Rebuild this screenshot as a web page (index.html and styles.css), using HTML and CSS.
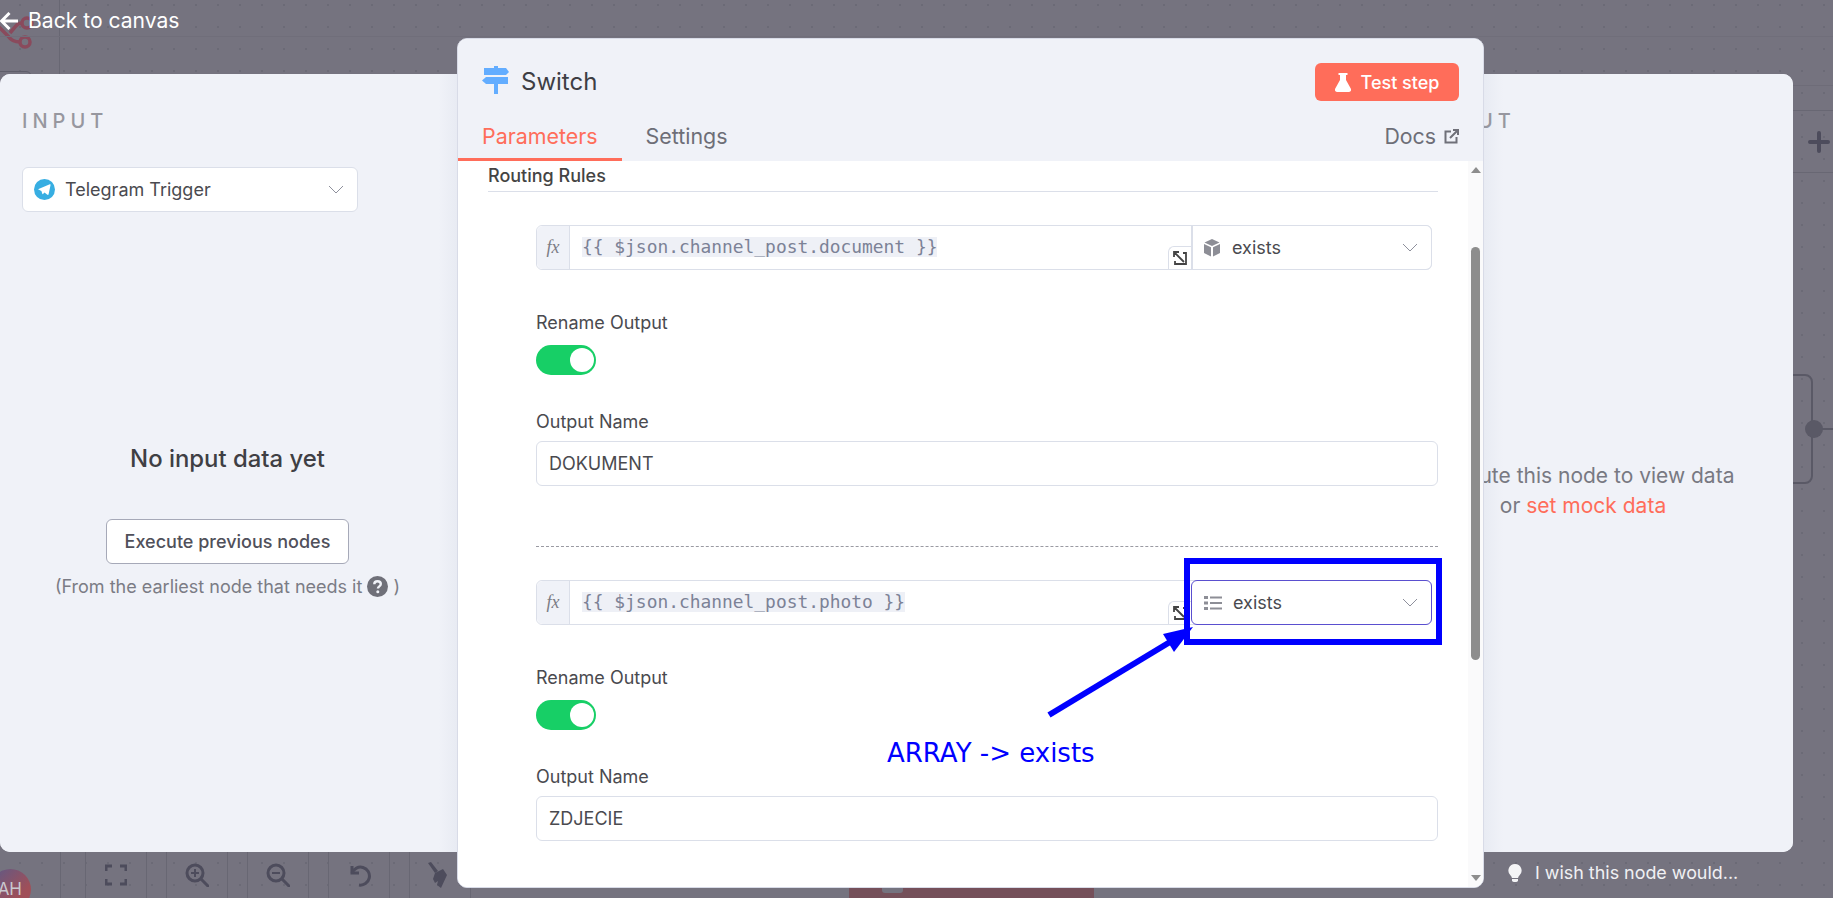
FILE: index.html
```html
<!DOCTYPE html>
<html lang="en">
<head>
<meta charset="utf-8">
<title>Switch</title>
<link rel="stylesheet" href="styles.css">
</head>
<body>
<div class="stage">
  <div class="canvas">
    <svg class="cv-logo" width="34" height="50" viewBox="0 0 34 50" fill="none" stroke="#8a4a5c" stroke-width="3.500"><circle cx="27" cy="23" r="5"/><circle cx="25" cy="42" r="5"/><path d="M-2 26L8 36Q12 42 20 42M10 33L16 26Q18 23 22 23"/></svg>
    <div class="cv-line cv-v1"></div>
    <div class="cv-line cv-h1"></div>
    <div class="cv-line cv-h2"></div>
    <div class="cv-line cv-h3"></div>
    <div class="cv-line cv-h4"></div>
    <div class="cv-box"></div>
    <svg class="cv-plus" width="22" height="22" viewBox="0 0 22 22"><path d="M11 2V20M2 11H20" stroke="#4d4c5c" stroke-width="4" stroke-linecap="round"/></svg>
    <div class="cv-bracket"></div>
    <div class="cv-bracket-wire"></div>
    <div class="cv-dot"></div>
    <div class="cv-avatar">AH</div>
    <div class="cv-toolbar">
      <div class="cv-tool"><svg width="22" height="22" viewBox="0 0 22 22" fill="none" stroke="#4d4c5c" stroke-width="3"><path d="M1 7V2H7M15 2H21V7M21 15V20H15M7 20H1V15"/></svg></div>
      <div class="cv-tool"><svg width="24" height="24" viewBox="0 0 24 24" fill="none" stroke="#4d4c5c" stroke-width="3"><circle cx="10" cy="10" r="8"/><path d="M16 16L23 23" stroke-linecap="round"/><path d="M10 6V14M6 10H14" stroke-width="2"/></svg></div>
      <div class="cv-tool"><svg width="24" height="24" viewBox="0 0 24 24" fill="none" stroke="#4d4c5c" stroke-width="3"><circle cx="10" cy="10" r="8"/><path d="M16 16L23 23" stroke-linecap="round"/><path d="M6 10H14" stroke-width="2"/></svg></div>
      <div class="cv-tool"><svg width="24" height="24" viewBox="0 0 24 24" fill="none" stroke="#4d4c5c" stroke-width="3"><path d="M5 3V10H12"/><path d="M5 10A9 9 0 1 1 12 22"/></svg></div>
      <div class="cv-tool"><svg width="26" height="26" viewBox="0 0 26 26" fill="#4d4c5c"><path d="M1 1L4 0L11 9L8 11Z"/><path d="M8 11L16 7L20 13L14 26L10 23L11 19L8 21L6 17Z"/></svg></div>
    </div>
    <div class="cv-exec"><span class="cv-exec-notch"></span></div>
  </div>

  <a class="back"><svg width="18" height="18" viewBox="0 0 18 18" fill="none" stroke="#fff" stroke-width="3"><path d="M18 9H1.500M9.500 1L1.500 9L9.500 17"/></svg><span>Back to canvas</span></a>

  <div class="wish"><svg width="14" height="18" viewBox="0 0 14 18" fill="#f4f4f6"><path d="M7 0a6.600 6.600 0 0 1 4.600 11.300c-.9.9-1.300 1.500-1.500 2.700H3.900c-.2-1.200-.6-1.800-1.500-2.700A6.600 6.600 0 0 1 7 0Z"/><path d="M4 15h6v1.200a1.800 1.800 0 0 1-1.800 1.800H5.800A1.800 1.800 0 0 1 4 16.200Z"/></svg><span>I wish this node would...</span></div>

  <div class="ndv">
    <section class="side side-input">
      <div class="side-label">INPUT</div>
      <div class="node-select">
        <svg width="21" height="21" viewBox="0 0 21 21"><circle cx="10.500" cy="10.500" r="10.500" fill="#37aee2"/><path d="M4 10.300L15.800 5.300C16.300 5.100 16.700 5.500 16.500 6.200L14.600 15.300C14.400 16 14 16.100 13.400 15.800L10.500 13.600L9 15C8.700 15.300 8.400 15.300 8.300 14.800L7.400 12Z" fill="#fff"/></svg>
        <span class="node-select-text">Telegram Trigger</span>
        <svg class="chev" width="16" height="9" viewBox="0 0 16 9" fill="none" stroke="#8e909c" stroke-width="1"><path d="M1 1L8 8L15 1"/></svg>
      </div>
      <div class="side-empty">
        <h2 class="empty-title">No input data yet</h2>
        <button class="exec-btn">Execute previous nodes</button>
        <p class="empty-hint">(From the earliest node that needs it <svg class="help" width="21" height="21" viewBox="0 0 21 21"><circle cx="10.500" cy="10.500" r="10.500" fill="#6f7079"/><path d="M7.300 8.200C7.300 6.300 8.700 5.200 10.500 5.200C12.400 5.200 13.800 6.300 13.800 8C13.800 10.400 10.900 10.300 10.900 12.500" fill="none" stroke="#f0f2f8" stroke-width="2.400"/><circle cx="10.800" cy="15.700" r="1.500" fill="#f0f2f8"/></svg> )</p>
      </div>
    </section>
    <section class="side side-output">
      <div class="side-label">OUTPUT</div>
      <div class="output-empty">
        <p>Execute this node to view data</p>
        <p>or <span class="link">set mock data</span></p>
      </div>
    </section>
  </div>

  <main class="panel">
    <header class="panel-head">
      <div class="title-row">
        <svg class="title-icon" width="28" height="28" viewBox="0 0 28 28" fill="#63adff"><path d="M12 0H16V3H12Z"/><path d="M2 2H24L27 6L24 9H2Z"/><path d="M4 11H26V18H4L0 14.500Z"/><path d="M12 18H16V28H12Z"/></svg>
        <h1 class="title">Switch</h1>
        <button class="test-btn"><svg width="16" height="19" viewBox="0 0 16 19" fill="#fff"><path d="M3.500 0H12.500V2H11V7L16 16C16.500 17.500 15.500 19 14 19H2C.5 19 -.5 17.500 0 16L5 7V2H3.500Z"/></svg>Test step</button>
      </div>
      <nav class="tabs">
        <a class="tab tab-active">Parameters</a>
        <a class="tab">Settings</a>
        <a class="docs">Docs <svg width="15" height="15" viewBox="0 0 15 15" fill="none" stroke="#6f7079" stroke-width="2"><path d="M7 2.500H1.500V13.500H12.500V8"/><path d="M6 9L13.500 1.500M9 1H14V6"/></svg></a>
      </nav>
    </header>
    <div class="panel-body">
      <div class="rules-head">Routing Rules</div>
      <div class="rule">
        <div class="expr-row">
          <div class="fx">fx</div>
          <div class="expr"><span class="expr-code">{{ $json.channel_post.document }}</span>
            <span class="expand"><svg width="16" height="16" viewBox="0 0 16 16" fill="none" stroke="#444" stroke-width="1.800"><path d="M2 2L12 12M2 7V2H7M11 3H14V14H3V11"/></svg></span>
          </div>
          <div class="op">
            <svg width="18" height="18" viewBox="0 0 18 18" fill="#8d8e96"><path d="M9 0L16.500 3.500L9 7L1.500 3.500Z"/><path d="M1 5L8 8.300V17.500L1 14Z"/><path d="M17 5L10 8.300V17.500L17 14Z"/></svg>
            <span class="op-text">exists</span>
            <svg class="chev" width="16" height="9" viewBox="0 0 16 9" fill="none" stroke="#8e909c" stroke-width="1"><path d="M1 1L8 8L15 1"/></svg>
          </div>
        </div>
        <div class="field-label label-rename">Rename Output</div>
        <div class="toggle"><span class="toggle-knob"></span></div>
        <div class="field-label label-name">Output Name</div>
        <div class="text-input">DOKUMENT</div>
      </div>
      <div class="rule-sep"></div>
      <div class="rule">
        <div class="expr-row">
          <div class="fx">fx</div>
          <div class="expr"><span class="expr-code">{{ $json.channel_post.photo }}</span>
            <span class="expand"><svg width="16" height="16" viewBox="0 0 16 16" fill="none" stroke="#444" stroke-width="1.800"><path d="M2 2L12 12M2 7V2H7M11 3H14V14H3V11"/></svg></span>
          </div>
          <div class="op op-focus">
            <svg width="18" height="14" viewBox="0 0 18 14" fill="#8d8e96"><rect x="0" y="0" width="4" height="3"/><rect x="0" y="5.500" width="4" height="3"/><rect x="0" y="11" width="4" height="3"/><rect x="6" y=".5" width="12" height="2"/><rect x="6" y="6" width="12" height="2"/><rect x="6" y="11.500" width="12" height="2"/></svg>
            <span class="op-text">exists</span>
            <svg class="chev" width="16" height="9" viewBox="0 0 16 9" fill="none" stroke="#8e909c" stroke-width="1"><path d="M1 1L8 8L15 1"/></svg>
          </div>
        </div>
        <div class="field-label label-rename">Rename Output</div>
        <div class="toggle"><span class="toggle-knob"></span></div>
        <div class="field-label label-name">Output Name</div>
        <div class="text-input">ZDJECIE</div>
      </div>
      <div class="scrollbar">
        <span class="sb-up"></span>
        <span class="sb-thumb"></span>
        <span class="sb-down"></span>
      </div>
    </div>
  </main>

  <div class="note-box"></div>
  <svg class="note-arrow" width="150" height="100" viewBox="0 0 150 100"><path d="M3 93L124 20" stroke="#0000ff" stroke-width="6"/><path d="M147 5L117 12L128 30Z" fill="#0000ff"/></svg>
  <div class="note-text">ARRAY -&gt; exists</div>
</div>
</body>
</html>
```

FILE: styles.css
```css
* { box-sizing: border-box; }
html, body { margin: 0; padding: 0; height: 100%; overflow: hidden; }
body { font-family: Inter, "Liberation Sans", sans-serif; color: #444; }
p, h1, h2 { margin: 0; font-weight: 400; }

.stage { position: relative; width: 1833px; height: 898px; overflow: hidden; }

/* dimmed workflow canvas behind the dialog */
.canvas {
  position: absolute; inset: 0;
  background-color: #75737f;
  background-image: radial-gradient(circle at 1px 1px, #6b6a76 1px, transparent 1.2px);
  background-size: 22px 22px;
  background-position: 19px 4px;
}
.cv-logo { position: absolute; left: 0; top: 0; }
.cv-line { position: absolute; background: #686773; }
.cv-v1 { left: 59px; top: 0; width: 1px; height: 74px; }
.cv-h1 { left: 0; right: 0; top: 36px; height: 1px; background: #706e7a; }
.cv-h2 { left: 1793px; right: 0; top: 85px; height: 1px; background: #6e6c78; }
.cv-h3 { left: 1793px; right: 0; top: 110px; height: 1px; }
.cv-h4 { left: 1793px; right: 0; top: 172px; height: 1px; }
.cv-box { position: absolute; left: -10px; top: 71px; width: 42px; height: 20px; border: 1px solid #5f5e6a; border-radius: 6px; }
.cv-plus { position: absolute; left: 1808px; top: 131px; }
.cv-bracket { position: absolute; left: 1780px; top: 374px; width: 33px; height: 110px; border: 2px solid #5a5966; border-radius: 8px; }
.cv-bracket-wire { position: absolute; left: 1814px; top: 428px; width: 19px; height: 2px; background: #5a5966; }
.cv-dot { position: absolute; left: 1805px; top: 420px; width: 18px; height: 18px; border-radius: 50%; background: #5a5966; }
.cv-avatar {
  position: absolute; left: -10px; top: 869px; width: 41px; height: 41px; border-radius: 50%; padding-right: 9px;
  background: linear-gradient(135deg, #5c5a88, #a04f58 70%);
  color: #c9c8cf; font-size: 17px; line-height: 41px; text-align: right;
}
.cv-toolbar { position: absolute; left: 60px; top: 852px; height: 46px; display: flex; gap: 19px; padding-left: 24px; border-left: 1px solid #686773; }
.cv-tool {
  width: 62px; height: 46px; display: flex; align-items: center; justify-content: center;
  border: 1px solid #686773; border-width: 0 1px;
}
.cv-exec { position: absolute; left: 849px; top: 887px; width: 245px; height: 11px; background: #75505a; }
.cv-exec-notch { position: absolute; left: 33px; top: 0; width: 21px; height: 6px; background: #75737f; border-radius: 0 0 3px 3px; }

.back { position: absolute; left: 0; top: 9px; display: flex; align-items: center; gap: 10px; color: #fff; font-size: 21.100px; line-height: 24px; }

.wish { position: absolute; left: 1508px; top: 861px; display: flex; align-items: center; gap: 13px; color: #f0f0f3; font-size: 17.900px; line-height: 24px; }

/* the two side panels */
.ndv {
  position: absolute; left: 0; top: 74px; width: 1793px; height: 778px;
  display: flex; justify-content: space-between;
  background: #f0f2f8; border-radius: 10px;
}
.side { padding: 0 22px; }
.side-input { width: 457px; background: linear-gradient(90deg, #f0f2f8 96%, #e8ebf3); border-radius: 10px 0 0 10px; }
.side-output { width: 420px; padding: 0 0 0 29px; background: linear-gradient(90deg, #e8ebf3 111px, #f0f2f8 130px); border-radius: 0 10px 10px 0; }
.side-label { margin-top: 34px; font-size: 20px; line-height: 26px; font-weight: 500; letter-spacing: 5px; color: #97979f; }

.node-select {
  margin-top: 33px; width: 336px; height: 45px; display: flex; align-items: center;
  padding: 0 13px 0 11px; background: #fff; border: 1px solid #dbdfe9; border-radius: 6px;
}
.node-select-text { margin-left: 10px; flex: 1; font-size: 18px; color: #4a4a4f; }

.side-empty { display: flex; flex-direction: column; align-items: center; padding: 232px 2px 0 0; }
.empty-title { font-size: 23.900px; line-height: 30px; font-weight: 500; color: #3f3f44; }
.exec-btn {
  margin-top: 45px; width: 243px; height: 45px; background: #fff; border: 1px solid #a6a9b8; border-radius: 6px;
  font: 500 18px Inter, sans-serif; color: #50505a;
}
.empty-hint { margin-top: 10px; font-size: 18px; line-height: 26px; color: #7b7c85; white-space: nowrap; }
.help { vertical-align: -4px; }

.output-empty { margin: 327px 0 0 -29px; text-align: center; font-size: 21px; line-height: 30px; color: #787982; white-space: nowrap; }
.link { color: #ff6d5a; }

/* the node settings dialog */
.panel {
  position: absolute; left: 457px; top: 38px; width: 1027px; height: 850px;
  display: flex; flex-direction: column;
  background: #fff; border-radius: 10px; overflow: hidden;
  border: 1px solid #d8dbe7;
}
.panel-head { height: 122px; flex: none; background: #f0f2f8; display: flex; flex-direction: column; }
.title-row { height: 83px; flex: none; display: flex; align-items: center; padding: 3px 24px 0 24px; }
.title-icon { margin-top: -4px; }
.title { margin-left: 11px; flex: 1; padding-bottom: 2px; font-size: 24px; color: #3e3e44; }
.test-btn {
  width: 144px; height: 38px; display: flex; align-items: center; justify-content: center; gap: 10px;
  background: #ff6d5a; border: 0; border-radius: 6px; color: #fff; font: 500 18px Inter, sans-serif;
}
.tabs { flex: 1; display: flex; align-items: flex-start; padding-right: 24px; }
.tab { padding: 0 24px; height: 39px; font-size: 21.400px; line-height: 28px; color: #6d6e77; }
.tab-active { color: #ff6d5a; border-bottom: 3px solid #ff6d5a; }
.docs { margin-left: auto; display: flex; align-items: center; gap: 8px; height: 28px; font-size: 21.300px; color: #6d6e77; }

.panel-body { position: relative; flex: 1; padding: 0 0 0 30px; overflow: hidden; background: #fff; }
.rules-head { width: 950px; height: 31px; padding-top: 2px; font-size: 18px; font-weight: 450; line-height: 26px; color: #444; border-bottom: 1px solid #dbdfe9; }
.rule { padding-left: 48px; width: 950px; }
.rule-sep { margin-left: 48px; width: 902px; margin-top: 60px; border-top: 1px dashed #9a9aa2; }
.rules-head + .rule, .rule-sep + .rule { padding-top: 33px; }

.expr-row { width: 896px; height: 45px; display: flex; border: 1px solid #dbdfe9; border-radius: 6px; }
.fx {
  width: 33px; flex: none; display: flex; align-items: center; justify-content: center;
  background: #f0f2f8; border-right: 1px solid #dbdfe9; border-radius: 6px 0 0 6px;
  font: italic 18px "Liberation Serif", serif; color: #7b7c85;
}
.expr { position: relative; flex: 1; display: flex; align-items: center; padding: 0 0 2px 12px; }
.expr-code { font: 17.900px/20px "DejaVu Sans Mono", monospace; background: #eef0f6; color: #7c8296; }
.expand {
  position: absolute; right: 0; bottom: 0; width: 23px; height: 23px;
  display: flex; align-items: center; justify-content: center;
  background: #fff; border: 1px solid #dbdfe9; border-width: 1px 0 0 1px; border-radius: 6px 0 0 0;
}
.op {
  width: 241px; flex: none; margin: -1px -1px -1px 0; display: flex; align-items: center; padding: 0 13px 0 10px;
  background: #fff; border: 1px solid #dbdfe9; border-radius: 0 6px 6px 0; border-left-width: 2px;
}
.op-focus { padding-left: 12px; border: 1px solid #5a4fcf; border-radius: 6px; }
.op-text { margin-left: 11px; flex: 1; font-size: 18px; color: #4a4a4f; }

.field-label { font-size: 18px; line-height: 26px; color: #4a4a4f; }
.label-rename { margin-top: 40px; }
.label-name { margin-top: 34px; }
.toggle { margin-top: 9px; width: 60px; height: 30px; padding: 3px 3px 3px 34px; border-radius: 15px; background: #17cf66; }
.toggle-knob { display: block; width: 24px; height: 24px; border-radius: 50%; background: #fff; }
.text-input {
  margin-top: 6px; width: 902px; height: 45px; padding-left: 12px; display: flex; align-items: center;
  border: 1px solid #dbdfe9; border-radius: 6px; font-size: 18px; color: #4a4a4f;
}
.scrollbar {
  position: absolute; right: 0; top: 0; bottom: 0; width: 15px; background: #fafafb;
  display: flex; flex-direction: column; align-items: center;
}
.sb-up { margin-top: 6px; border: 5px solid transparent; border-top: 0; border-bottom: 6px solid #8d8d8d; }
.sb-thumb { position: absolute; top: 86px; left: 3px; width: 9px; height: 413px; background: #8d8d8d; border-radius: 5px; }
.sb-down { position: absolute; bottom: 6px; border: 5px solid transparent; border-bottom: 0; border-top: 6px solid #8d8d8d; }

/* annotation drawn over the screenshot */
.note-box { position: absolute; left: 1184px; top: 558px; width: 258px; height: 87px; border: 6px solid #0000ff; }
.note-arrow { position: absolute; left: 1046px; top: 622px; }
.note-text { position: absolute; left: 887px; top: 736px; font: 26px/34px "DejaVu Sans", sans-serif; color: #0000ff; white-space: nowrap; }
```
